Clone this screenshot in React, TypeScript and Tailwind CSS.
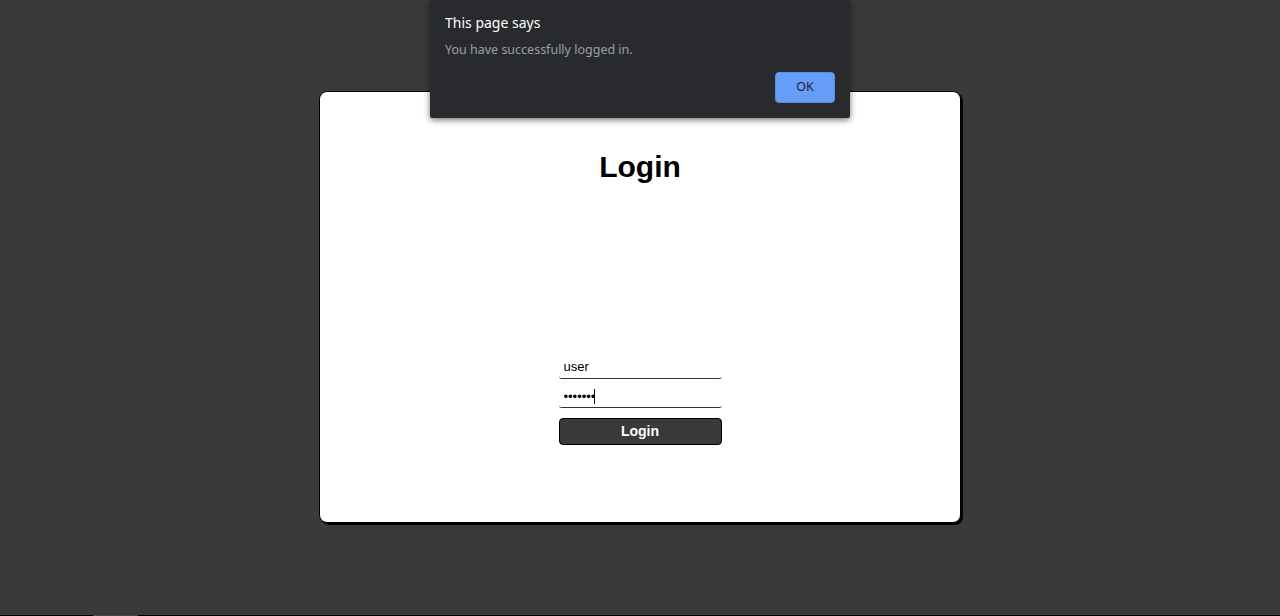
import React from 'react'

// Browser-style alert box shown over the page after a successful login
function AlertBox() {
  return (
    <div className="absolute left-[430px] top-0 w-[420px] h-[118px] bg-[#292a2d] shadow-[0_2px_6px_rgba(0,0,0,0.55)] rounded-b-[2px] px-[15px] pt-[13px] font-['Noto_Sans',sans-serif]">
      <div className="text-[14px] leading-[20px] text-white">This page says</div>
      <div className="mt-[8px] text-[12.5px] leading-[18px] text-[#9aa0a6]">You have successfully logged in.</div>
      <div className="flex justify-end mt-[13px]">
        <button className="w-[60px] h-[31px] rounded-[4px] bg-[#669df6] text-[#202124] text-[12.5px] leading-none border border-[#5b8ee0]">
          OK
        </button>
      </div>
    </div>
  )
}

export default function App() {
  return (
    <div className="relative h-[616px] bg-[#3a3a3a] overflow-hidden flex flex-col font-['Liberation_Sans',Arial,sans-serif]">
      <div className="flex-1 flex justify-center pt-[91px]">
        <div className="w-[642px] h-[432px] bg-white border border-black rounded-[8px] shadow-[2px_2px_0_#000] flex flex-col items-center">
          <h1 className="mt-[57px] text-[30px] leading-[35px] font-bold text-black">Login</h1>

          <form className="mt-[174px] w-[163px] flex flex-col" onSubmit={e => e.preventDefault()}>
            <input
              type="text"
              defaultValue="user"
              className="block h-[21px] px-[5px] pb-[3px] text-[13px] text-black bg-white border-b border-[#333] rounded-[3px] outline-none"
            />
            <div className="relative mt-[8px]">
              <input
                type="password"
                defaultValue="1234567"
                className="block w-full h-[21px] px-[5px] pb-[2px] text-[13px] text-black bg-white border-b border-[#333] rounded-[3px] outline-none"
              />
              {/* text cursor after the last dot */}
              <span className="absolute left-[35px] top-[2px] w-px h-[15px] bg-black" />
            </div>
            <button
              type="submit"
              className="mt-[10px] h-[27px] rounded-[4px] bg-[#3a3a3a] border border-black text-white text-[14px] font-bold"
            >
              Login
            </button>
          </form>
        </div>
      </div>
      {/* bottom edge strip */}
      <div className="h-px flex">
        <div className="w-[93px] bg-black" />
        <div className="w-[45px] bg-[#4a4a4a]" />
        <div className="flex-1 bg-black" />
      </div>
      <AlertBox />
    </div>
  )
}
